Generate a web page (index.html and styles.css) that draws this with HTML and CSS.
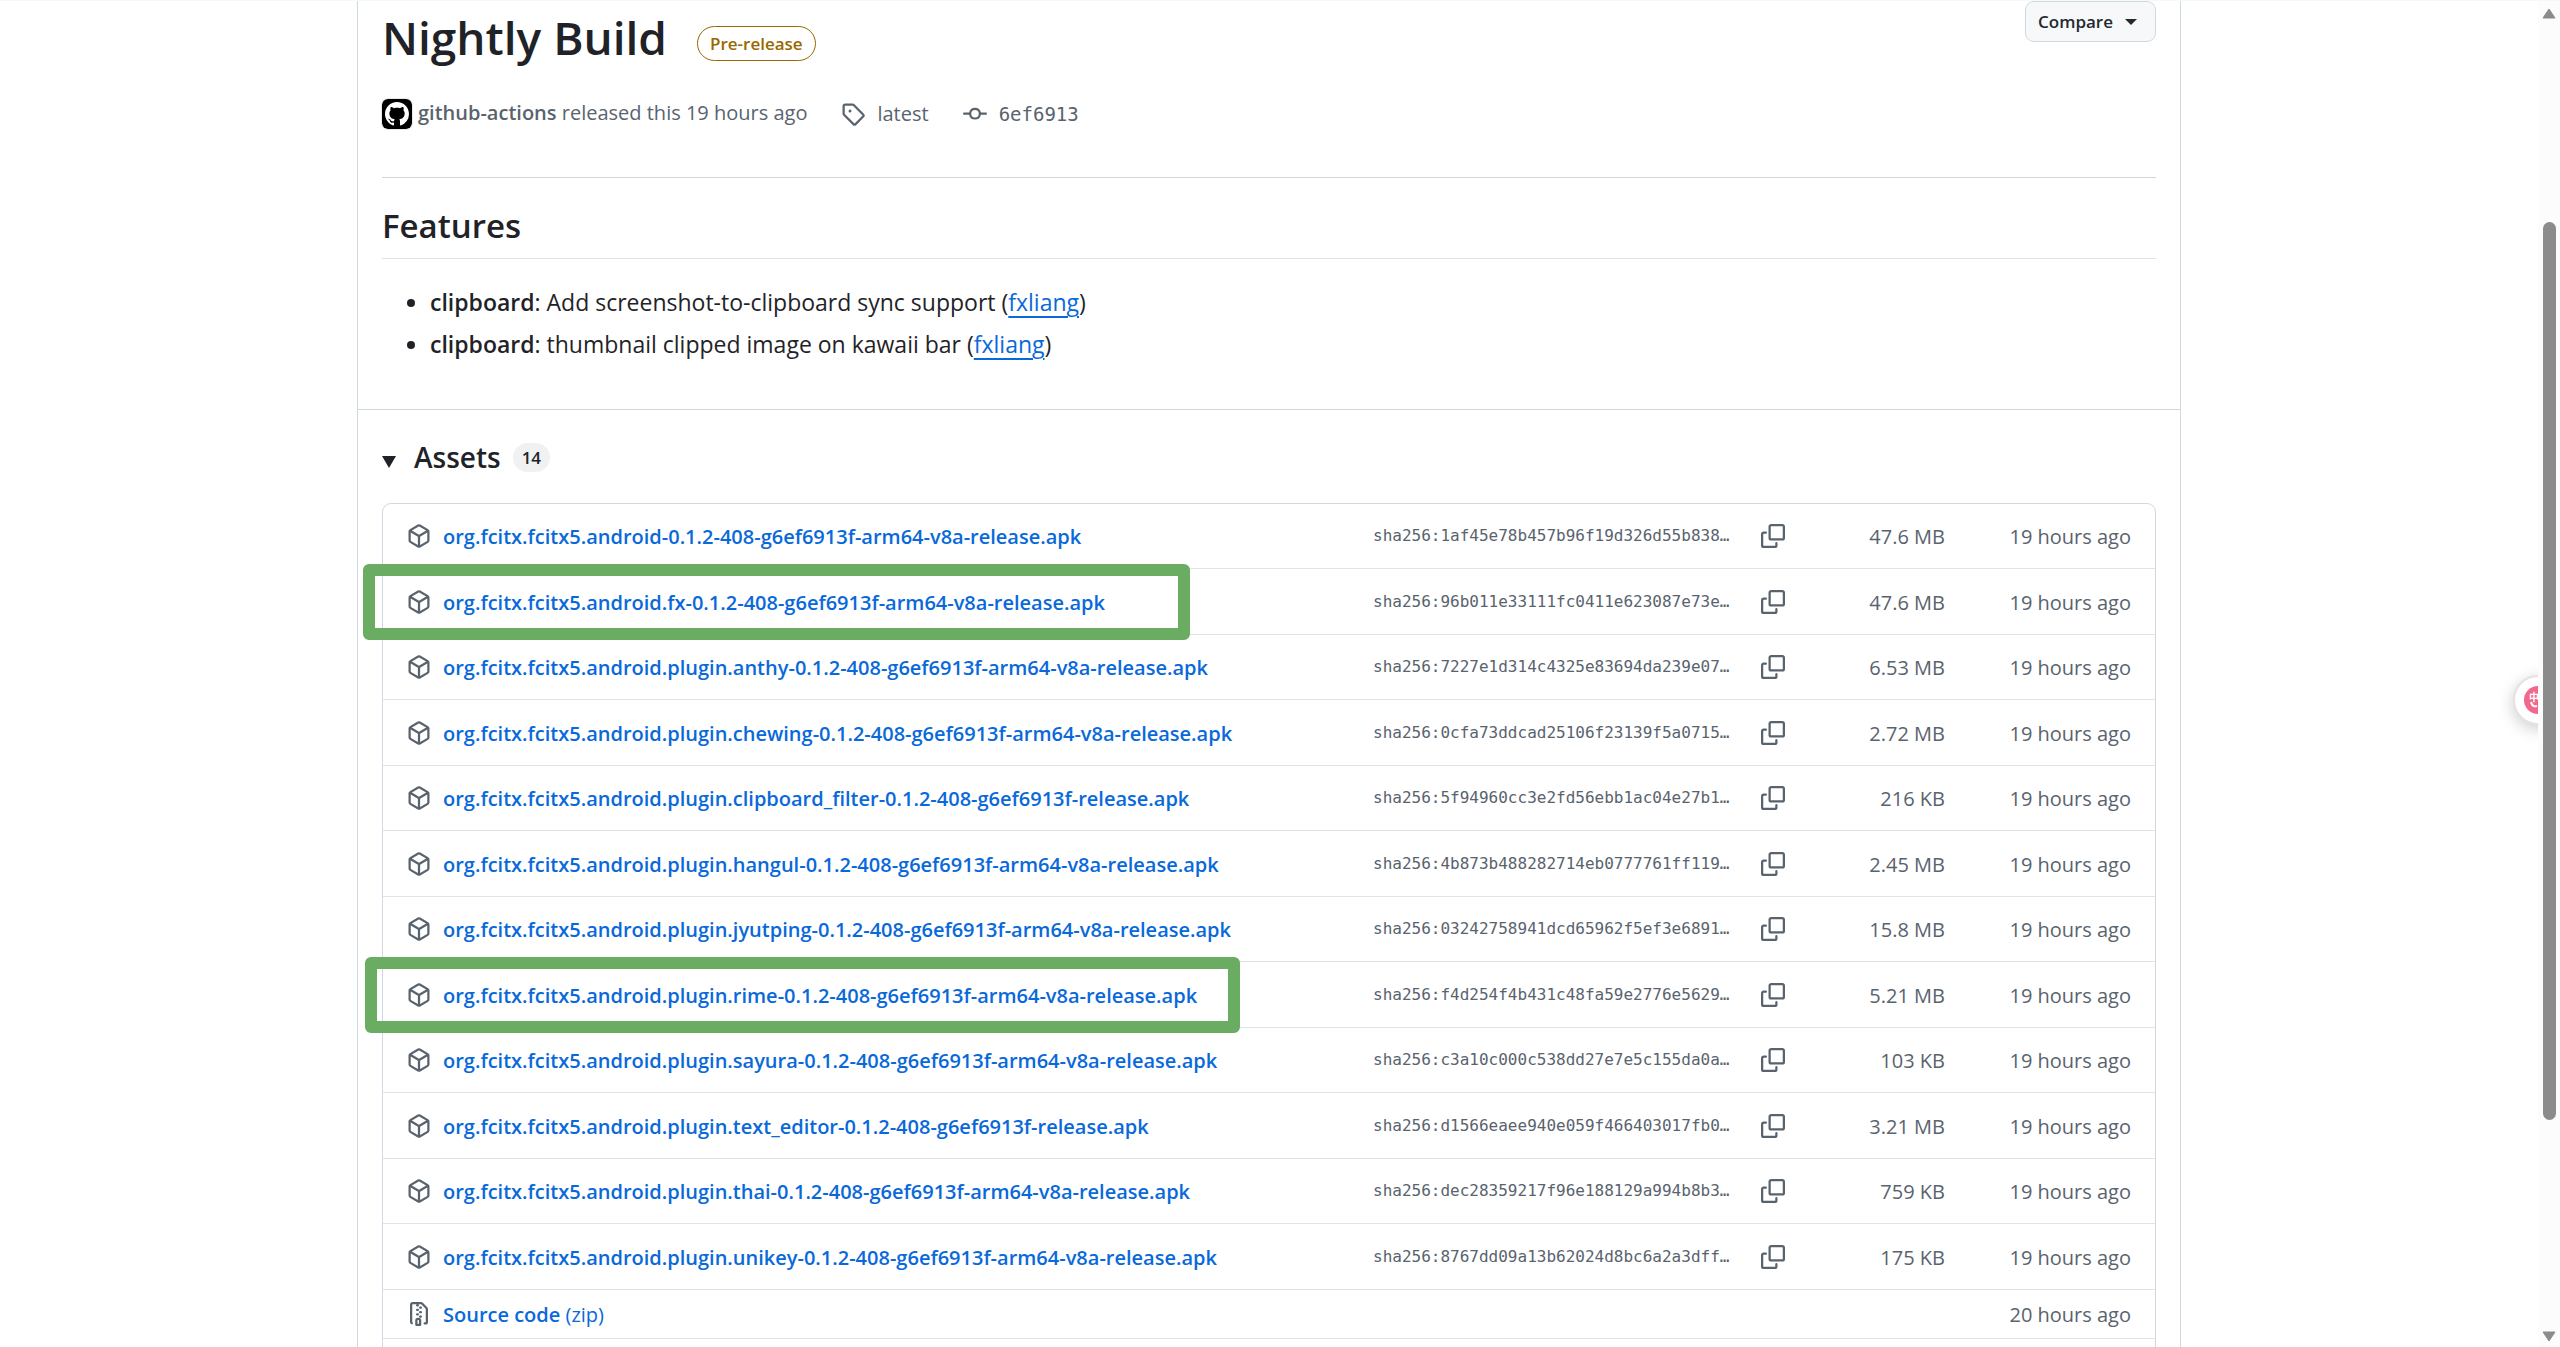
FILE: index.html
```html
<!DOCTYPE html>
<html lang="en">

<head>
    <meta charset="UTF-8">
    <meta name="viewport" content="width=device-width, initial-scale=1.0">
    <title>Release Nightly Build</title>
    <link rel="stylesheet" href="styles.css">
</head>

<body>

    <!-- Icon set -->
    <svg class="sprite" aria-hidden="true">
        <symbol id="package" viewBox="0 0 16 16">
            <path d="m8.878.392 5.25 3.045c.54.314.872.89.872 1.514v6.098a1.75 1.75 0 0 1-.872 1.514l-5.25 3.045a1.75 1.75 0 0 1-1.756 0l-5.25-3.045A1.75 1.75 0 0 1 1 11.049V4.951c0-.624.332-1.201.872-1.514L7.122.392a1.75 1.75 0 0 1 1.756 0ZM7.875 1.69l-4.63 2.685L8 7.133l4.755-2.758-4.63-2.685a.248.248 0 0 0-.25 0ZM2.5 5.677v5.372c0 .09.047.171.125.216l4.625 2.683V8.432Zm6.25 8.271 4.625-2.683a.25.25 0 0 0 .125-.216V5.677L8.75 8.432Z"/>
        </symbol>
        <symbol id="copy" viewBox="0 0 16 16">
            <path d="M0 6.75C0 5.784.784 5 1.75 5h1.5a.75.75 0 0 1 0 1.5h-1.5a.25.25 0 0 0-.25.25v7.5c0 .138.112.25.25.25h7.5a.25.25 0 0 0 .25-.25v-1.5a.75.75 0 0 1 1.5 0v1.5A1.75 1.75 0 0 1 9.25 16h-7.5A1.75 1.75 0 0 1 0 14.25Z"/>
            <path d="M5 1.75C5 .784 5.784 0 6.75 0h7.5C15.216 0 16 .784 16 1.75v7.5A1.75 1.75 0 0 1 14.25 11h-7.5A1.75 1.75 0 0 1 5 9.25Zm1.75-.25a.25.25 0 0 0-.25.25v7.5c0 .138.112.25.25.25h7.5a.25.25 0 0 0 .25-.25v-7.5a.25.25 0 0 0-.25-.25Z"/>
        </symbol>
        <symbol id="tag" viewBox="0 0 16 16">
            <path d="M1 7.775V2.75C1 1.784 1.784 1 2.75 1h5.025c.464 0 .91.184 1.238.513l6.25 6.25a1.75 1.75 0 0 1 0 2.474l-5.026 5.026a1.75 1.75 0 0 1-2.474 0l-6.25-6.25A1.752 1.752 0 0 1 1 7.775Zm1.5 0c0 .066.026.13.073.177l6.25 6.25a.25.25 0 0 0 .354 0l5.025-5.025a.25.25 0 0 0 0-.354l-6.25-6.25a.25.25 0 0 0-.177-.073H2.75a.25.25 0 0 0-.25.25ZM6 5a1 1 0 1 1 0 2 1 1 0 0 1 0-2Z"/>
        </symbol>
        <symbol id="commit" viewBox="0 0 16 16">
            <path d="M11.93 8.5a4.002 4.002 0 0 1-7.86 0H.75a.75.75 0 0 1 0-1.5h3.32a4.002 4.002 0 0 1 7.86 0h3.32a.75.75 0 0 1 0 1.5Zm-1.43-.75a2.5 2.5 0 1 0-5 0 2.5 2.5 0 0 0 5 0Z"/>
        </symbol>
        <symbol id="zip" viewBox="0 0 16 16">
            <path d="M3.5 1.75v11.5c0 .09.048.173.126.217a.75.75 0 0 1-.752 1.298A1.748 1.748 0 0 1 2 13.25V1.75C2 .784 2.784 0 3.75 0h5.586c.464 0 .909.185 1.237.513l2.914 2.914c.329.328.513.773.513 1.237v8.586A1.75 1.75 0 0 1 12.25 15h-.5a.75.75 0 0 1 0-1.5h.5a.25.25 0 0 0 .25-.25V4.664a.25.25 0 0 0-.073-.177L9.513 1.573a.25.25 0 0 0-.177-.073H7.25a.75.75 0 0 1 0 1.5h-.5a.75.75 0 0 1 0-1.5h-3a.25.25 0 0 0-.25.25Zm3.75 8.75h.5c.966 0 1.75.784 1.75 1.75v3a.75.75 0 0 1-.75.75h-2.5a.75.75 0 0 1-.75-.75v-3c0-.966.784-1.75 1.75-1.75ZM6 5.25a.75.75 0 0 1 .75-.75h.5a.75.75 0 0 1 0 1.5h-.5A.75.75 0 0 1 6 5.25Zm.75 2.25h.5a.75.75 0 0 1 0 1.5h-.5a.75.75 0 0 1 0-1.5ZM8 6.75A.75.75 0 0 1 8.75 6h.5a.75.75 0 0 1 0 1.5h-.5A.75.75 0 0 1 8 6.75ZM8.75 3h.5a.75.75 0 0 1 0 1.5h-.5a.75.75 0 0 1 0-1.5ZM8 9.75A.75.75 0 0 1 8.75 9h.5a.75.75 0 0 1 0 1.5h-.5A.75.75 0 0 1 8 9.75Zm-1 2.5v2.25h1v-2.25a.25.25 0 0 0-.25-.25h-.5a.25.25 0 0 0-.25.25Z"/>
        </symbol>
    </svg>

    <main class="page">
        <article class="release">
            <div class="release-body">
                <header class="release-header">
                    <div class="release-title">
                        <h1>Nightly Build</h1>
                        <span class="label">Pre-release</span>
                    </div>
                    <button class="compare" type="button">Compare <span class="caret"></span></button>
                </header>

                <div class="meta">
                    <div class="author">
                        <svg class="avatar" viewBox="0 0 30 30" aria-hidden="true">
                            <rect width="30" height="30" rx="5" fill="#000"/>
                            <path transform="translate(3 3) scale(1.5)" fill="#fff" d="M8 0C3.58 0 0 3.58 0 8c0 3.54 2.29 6.53 5.47 7.59.4.07.55-.17.55-.38 0-.19-.01-.82-.01-1.49-2.01.37-2.53-.49-2.69-.94-.09-.23-.48-.94-.82-1.13-.28-.15-.68-.52-.01-.53.63-.01 1.08.58 1.23.82.72 1.21 1.87.87 2.33.66.07-.52.28-.87.51-1.07-1.78-.2-3.64-.89-3.64-3.95 0-.87.31-1.59.82-2.15-.08-.2-.36-1.02.08-2.12 0 0 .67-.21 2.2.82.64-.18 1.32-.27 2-.27.68 0 1.36.09 2 .27 1.53-1.04 2.2-.82 2.2-.82.44 1.1.16 1.92.08 2.12.51.56.82 1.27.82 2.15 0 3.07-1.87 3.75-3.65 3.95.29.25.54.73.54 1.48 0 1.07-.01 1.93-.01 2.2 0 .21.15.46.55.38A8.013 8.013 0 0 0 16 8c0-4.42-3.58-8-8-8z"/>
                        </svg>
                        <span><a class="muted-link" href="#"><b>github-actions</b></a> released this 19 hours ago</span>
                    </div>
                    <a class="muted-link ref" href="#"><svg class="icon"><use href="#tag"/></svg>latest</a>
                    <a class="muted-link ref" href="#"><svg class="icon"><use href="#commit"/></svg><code>6ef6913</code></a>
                </div>

                <div class="notes">
                    <h2>Features</h2>
                    <ul>
                        <li><b>clipboard</b>: Add screenshot-to-clipboard sync support (<a href="#">fxliang</a>)</li>
                        <li><b>clipboard</b>: thumbnail clipped image on kawaii bar (<a href="#">fxliang</a>)</li>
                    </ul>
                </div>
            </div>

            <details class="assets" open>
                <summary>
                    <svg class="arrow" viewBox="0 0 14 24" aria-hidden="true"><path d="M0 11h14L7 23z"/></svg>
                    <span class="assets-title">Assets</span>
                    <span class="counter">14</span>
                </summary>

                <ul class="asset-list">
                    <li>
                        <svg class="icon"><use href="#package"/></svg>
                        <a href="#">org.fcitx.fcitx5.android-0.1.2-408-g6ef6913f-arm64-v8a-release.apk</a>
                        <code>sha256:1af45e78b457b96f19d326d55b838…</code>
                        <button type="button" aria-label="Copy digest"><svg class="icon"><use href="#copy"/></svg></button>
                        <span>47.6 MB</span>
                        <span>19 hours ago</span>
                    </li>
                    <li>
                        <svg class="icon"><use href="#package"/></svg>
                        <a href="#">org.fcitx.fcitx5.android.fx-0.1.2-408-g6ef6913f-arm64-v8a-release.apk</a>
                        <code>sha256:96b011e33111fc0411e623087e73e…</code>
                        <button type="button" aria-label="Copy digest"><svg class="icon"><use href="#copy"/></svg></button>
                        <span>47.6 MB</span>
                        <span>19 hours ago</span>
                        <div class="marker marker-fx"></div>
                    </li>
                    <li>
                        <svg class="icon"><use href="#package"/></svg>
                        <a href="#">org.fcitx.fcitx5.android.plugin.anthy-0.1.2-408-g6ef6913f-arm64-v8a-release.apk</a>
                        <code>sha256:7227e1d314c4325e83694da239e07…</code>
                        <button type="button" aria-label="Copy digest"><svg class="icon"><use href="#copy"/></svg></button>
                        <span>6.53 MB</span>
                        <span>19 hours ago</span>
                    </li>
                    <li>
                        <svg class="icon"><use href="#package"/></svg>
                        <a href="#">org.fcitx.fcitx5.android.plugin.chewing-0.1.2-408-g6ef6913f-arm64-v8a-release.apk</a>
                        <code>sha256:0cfa73ddcad25106f23139f5a0715…</code>
                        <button type="button" aria-label="Copy digest"><svg class="icon"><use href="#copy"/></svg></button>
                        <span>2.72 MB</span>
                        <span>19 hours ago</span>
                    </li>
                    <li>
                        <svg class="icon"><use href="#package"/></svg>
                        <a href="#">org.fcitx.fcitx5.android.plugin.clipboard_filter-0.1.2-408-g6ef6913f-release.apk</a>
                        <code>sha256:5f94960cc3e2fd56ebb1ac04e27b1…</code>
                        <button type="button" aria-label="Copy digest"><svg class="icon"><use href="#copy"/></svg></button>
                        <span>216 KB</span>
                        <span>19 hours ago</span>
                    </li>
                    <li>
                        <svg class="icon"><use href="#package"/></svg>
                        <a href="#">org.fcitx.fcitx5.android.plugin.hangul-0.1.2-408-g6ef6913f-arm64-v8a-release.apk</a>
                        <code>sha256:4b873b488282714eb0777761ff119…</code>
                        <button type="button" aria-label="Copy digest"><svg class="icon"><use href="#copy"/></svg></button>
                        <span>2.45 MB</span>
                        <span>19 hours ago</span>
                    </li>
                    <li>
                        <svg class="icon"><use href="#package"/></svg>
                        <a href="#">org.fcitx.fcitx5.android.plugin.jyutping-0.1.2-408-g6ef6913f-arm64-v8a-release.apk</a>
                        <code>sha256:03242758941dcd65962f5ef3e6891…</code>
                        <button type="button" aria-label="Copy digest"><svg class="icon"><use href="#copy"/></svg></button>
                        <span>15.8 MB</span>
                        <span>19 hours ago</span>
                    </li>
                    <li>
                        <svg class="icon"><use href="#package"/></svg>
                        <a href="#">org.fcitx.fcitx5.android.plugin.rime-0.1.2-408-g6ef6913f-arm64-v8a-release.apk</a>
                        <code>sha256:f4d254f4b431c48fa59e2776e5629…</code>
                        <button type="button" aria-label="Copy digest"><svg class="icon"><use href="#copy"/></svg></button>
                        <span>5.21 MB</span>
                        <span>19 hours ago</span>
                        <div class="marker marker-rime"></div>
                    </li>
                    <li>
                        <svg class="icon"><use href="#package"/></svg>
                        <a href="#">org.fcitx.fcitx5.android.plugin.sayura-0.1.2-408-g6ef6913f-arm64-v8a-release.apk</a>
                        <code>sha256:c3a10c000c538dd27e7e5c155da0a…</code>
                        <button type="button" aria-label="Copy digest"><svg class="icon"><use href="#copy"/></svg></button>
                        <span>103 KB</span>
                        <span>19 hours ago</span>
                    </li>
                    <li>
                        <svg class="icon"><use href="#package"/></svg>
                        <a href="#">org.fcitx.fcitx5.android.plugin.text_editor-0.1.2-408-g6ef6913f-release.apk</a>
                        <code>sha256:d1566eaee940e059f466403017fb0…</code>
                        <button type="button" aria-label="Copy digest"><svg class="icon"><use href="#copy"/></svg></button>
                        <span>3.21 MB</span>
                        <span>19 hours ago</span>
                    </li>
                    <li>
                        <svg class="icon"><use href="#package"/></svg>
                        <a href="#">org.fcitx.fcitx5.android.plugin.thai-0.1.2-408-g6ef6913f-arm64-v8a-release.apk</a>
                        <code>sha256:dec28359217f96e188129a994b8b3…</code>
                        <button type="button" aria-label="Copy digest"><svg class="icon"><use href="#copy"/></svg></button>
                        <span>759 KB</span>
                        <span>19 hours ago</span>
                    </li>
                    <li>
                        <svg class="icon"><use href="#package"/></svg>
                        <a href="#">org.fcitx.fcitx5.android.plugin.unikey-0.1.2-408-g6ef6913f-arm64-v8a-release.apk</a>
                        <code>sha256:8767dd09a13b62024d8bc6a2a3dff…</code>
                        <button type="button" aria-label="Copy digest"><svg class="icon"><use href="#copy"/></svg></button>
                        <span>175 KB</span>
                        <span>19 hours ago</span>
                    </li>
                    <li class="source">
                        <svg class="icon"><use href="#zip"/></svg>
                        <a href="#">Source code <small>(zip)</small></a>
                        <span>20 hours ago</span>
                    </li>
                    <li class="source"></li>
                </ul>
            </details>
        </article>

        <button class="translate" type="button" aria-label="Translate">
            <svg viewBox="0 0 28 28" aria-hidden="true">
                <circle cx="14" cy="14" r="14" fill="#f2688c"/>
                <text x="10" y="15" text-anchor="middle">中</text>
                <path d="M7 16q1 5 6 4" fill="none" stroke="#fff" stroke-width="2"/>
            </svg>
        </button>
    </main>

    <div class="scrollbar" aria-hidden="true">
        <svg viewBox="0 0 14 11"><path d="M7 1l6 9H1z"/></svg>
        <div class="track">
            <div class="thumb"></div>
        </div>
        <svg viewBox="0 0 14 11"><path d="M7 10l6-9H1z"/></svg>
    </div>

</body>

</html>
```
FILE: styles.css
```css
* {
    box-sizing: border-box;
}

body {
    margin: 0;
    height: 100vh;
    display: flex;
    overflow: hidden;
    border-top: 1px solid #f2fafa;
    background-color: #ffffff;
    color: #1f2328;
    font-family: "Open Sans", "Noto Sans CJK SC", sans-serif;
    font-size: 20px;
    line-height: 28px;
}

h1, h2, ul {
    margin: 0;
    padding: 0;
}

h1, h2, b {
    font-weight: 600;
}

a {
    color: #0969da;
}

code {
    font-family: "DejaVu Sans Mono", monospace;
}

button {
    font-family: inherit;
    cursor: pointer;
}

.sprite {
    display: none;
}

.icon {
    display: block;
    flex: none;
    width: 24px;
    height: 24px;
    fill: #59636e;
}

.page {
    position: relative;
    flex: 1;
    overflow: hidden;
}

.release {
    max-width: 1824px;
    margin: 0 auto;
    border: 1px solid #d1d9e0;
    border-width: 0 1px;
}

.release-body {
    padding: 0 24px 47px;
    border-bottom: 1px solid #d1d9e0;
}

.release-header {
    display: flex;
    justify-content: space-between;
    align-items: flex-start;
}

.release-title {
    display: flex;
    align-items: flex-end;
    gap: 30px;
    padding-top: 12px;
}

h1 {
    font-size: 46px;
    line-height: 48px;
}

.label {
    padding: 0 12px;
    border: 1px solid #9a6700;
    border-radius: 18px;
    color: #9a6700;
    font-size: 17px;
    font-weight: 600;
    line-height: 33px;
}

.compare {
    display: flex;
    align-items: center;
    gap: 12px;
    height: 41px;
    padding: 0 18px 0 12px;
    border: 1px solid #d1d9e0;
    border-radius: 9px;
    background-color: #f6f8fa;
    color: #25292e;
    font-size: 17px;
    font-weight: 600;
}

.caret {
    border: 6px solid transparent;
    border-top-color: #25292e;
    border-bottom: 0;
}

.meta {
    display: flex;
    align-items: flex-start;
    gap: 34px;
    margin-top: 38px;
    color: #59636e;
}

.author {
    display: flex;
    gap: 6px;
}

.avatar {
    width: 30px;
    height: 30px;
    border-radius: 6px;
    box-shadow: 0 0 0 1px #e6e8ea;
}

.muted-link {
    color: #59636e;
    text-decoration: none;
}

.ref {
    display: flex;
    align-items: center;
    gap: 12px;
    line-height: 30px;
}

.ref code {
    font-size: 19px;
}

.notes {
    margin-top: 48px;
    padding-top: 28px;
    border-top: 1px solid #d1d9e0;
}

h2 {
    padding-bottom: 12px;
    border-bottom: 1px solid #dfe4e9;
    font-size: 33px;
    line-height: 40px;
}

.notes ul {
    display: grid;
    gap: 6px;
    margin-top: 25px;
    padding-left: 48px;
    font-size: 23px;
    line-height: 36px;
}

.notes a {
    text-decoration-thickness: 2px;
    text-underline-offset: 5px;
}

.assets {
    padding: 27px 24px;
}

.assets summary {
    display: flex;
    align-items: center;
    list-style: none;
    cursor: pointer;
}

.arrow {
    width: 14px;
    height: 24px;
    fill: #1f2328;
}

.assets-title {
    margin: 0 12px 0 18px;
    font-size: 28px;
    font-weight: 600;
    line-height: 40px;
}

.counter {
    padding: 0 9px;
    border-radius: 15px;
    background-color: #eff1f3;
    font-size: 17px;
    font-weight: 600;
    line-height: 29px;
}

.asset-list {
    margin-top: 26px;
    border: 1px solid #d1d9e0;
    border-radius: 9px;
    list-style: none;
}

.asset-list li {
    position: relative;
    display: grid;
    grid-template-columns: 24px 1fr 376px 24px 148px 174px;
    align-items: center;
    column-gap: 12px;
    min-height: 65px;
    padding: 0 24px;
    border-bottom: 1px solid #dfe4e9;
    color: #59636e;
}

.asset-list li:nth-child(even) {
    min-height: 66px;
}

.asset-list a,
.asset-list span {
    padding-top: 2px;
}

.asset-list a {
    font-weight: 600;
    text-decoration: none;
}

.asset-list small {
    font-size: 20px;
    font-weight: 400;
}

.asset-list code {
    font-size: 16px;
}

.asset-list span {
    text-align: right;
}

.asset-list button {
    padding: 0;
    border: none;
    background: none;
}

.asset-list .source {
    grid-template-columns: 24px 1fr auto;
    min-height: 49px;
}

/* Green frames round the two packages to install */
.marker {
    position: absolute;
    top: -5px;
    bottom: -6px;
    border: 12px solid #6aac62;
    border-radius: 6px;
    pointer-events: none;
}

.marker-fx {
    left: -20px;
    width: 827px;
}

.marker-rime {
    left: -18px;
    width: 875px;
}

.translate {
    position: absolute;
    top: 674px;
    right: -25px;
    width: 50px;
    height: 50px;
    padding: 9px;
    border: 2px solid #e3e3e3;
    border-radius: 50%;
    background-color: #ffffff;
    box-shadow: 0 4px 16px rgba(0, 0, 0, 0.2);
}

.translate svg {
    display: block;
    width: 28px;
    height: 28px;
}

.translate text {
    fill: #ffffff;
    font-family: "Noto Sans CJK SC", sans-serif;
    font-size: 10px;
    font-weight: 700;
}

.scrollbar {
    display: flex;
    flex-direction: column;
    align-items: center;
    width: 22px;
    padding: 7px 0 5px;
    background-color: #fcfcfc;
}

.scrollbar svg {
    width: 14px;
    height: 11px;
    fill: #8b8b8b;
    stroke: #8b8b8b;
    stroke-linejoin: round;
}

.track {
    flex: 1;
    width: 13px;
    padding-top: 203px;
}

.thumb {
    height: 81%;
    border-radius: 7px;
    background-color: #8b8b8b;
}
```
